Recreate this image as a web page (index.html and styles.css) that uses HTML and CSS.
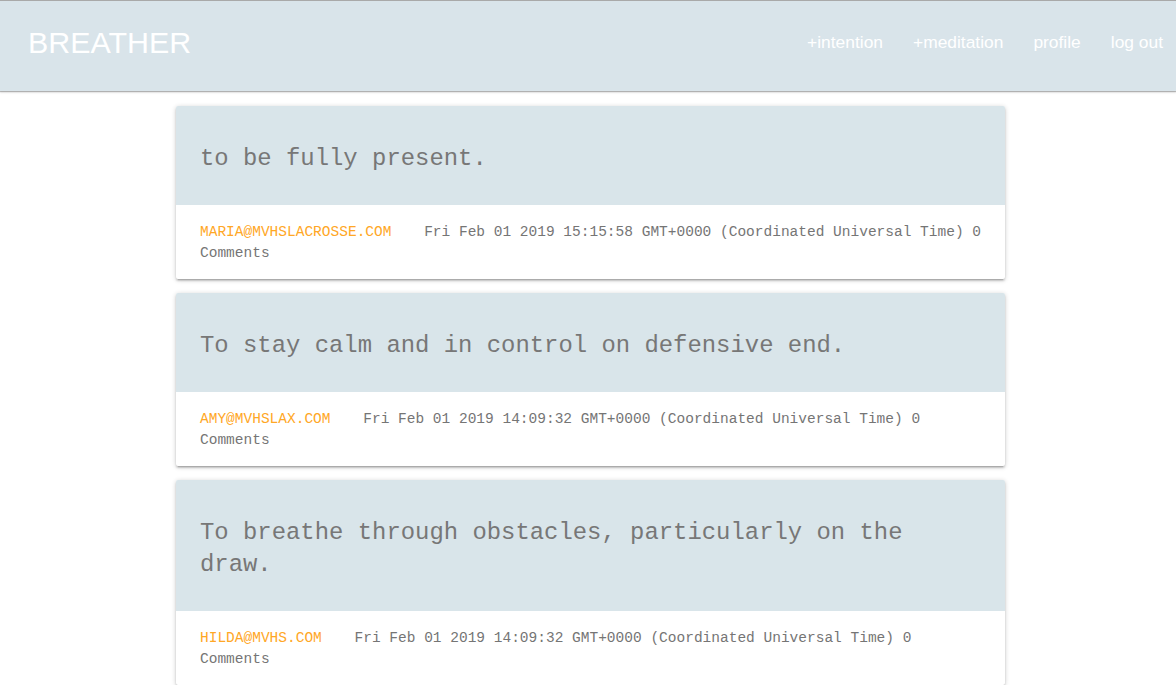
FILE: index.html
```html
<!DOCTYPE html>
<html>
<head>
<meta charset="utf-8">
<link rel="stylesheet" href="styles.css">
</head>
<body>
<nav class="nav">
  <a class="brand" href="#">BREATHER</a>
  <ul class="links">
    <li><a href="#">+intention</a></li>
    <li><a href="#">+meditation</a></li>
    <li><a href="#">profile</a></li>
    <li><a href="#">log out</a></li>
  </ul>
</nav>
<main class="container">
  <div class="card">
    <div class="card-title">to be fully present.</div>
    <div class="card-action"><span class="email">maria@mvhslacrosse.com</span> <span class="date">Fri Feb 01 2019 15:15:58 GMT+0000 (Coordinated Universal Time) 0</span> <span class="count">Comments</span></div>
  </div>
  <div class="card">
    <div class="card-title">To stay calm and in control on defensive end.</div>
    <div class="card-action"><span class="email">amy@mvhslax.com</span> <span class="date">Fri Feb 01 2019 14:09:32 GMT+0000 (Coordinated Universal Time) 0</span> <span class="count">Comments</span></div>
  </div>
  <div class="card">
    <div class="card-title">To breathe through obstacles, particularly on the draw.</div>
    <div class="card-action"><span class="email">hilda@mvhs.com</span> <span class="date">Fri Feb 01 2019 14:09:32 GMT+0000 (Coordinated Universal Time) 0</span> <span class="count">Comments</span></div>
  </div>
</main>
</body>
</html>
```
FILE: styles.css
```css
html, body {
  margin: 0;
  padding: 0;
  background: #fff;
}
body {
  font-family: "Liberation Sans", Arial, sans-serif;
  overflow: hidden;
}
.nav {
  height: 82px;
  padding-bottom: 8px;
  border-top: 1px solid #a9a9a9;
  background: #d9e4ea;
  box-shadow: 0 1px 1px rgba(0,0,0,0.25), 0 2px 2px rgba(0,0,0,0.08);
  display: flex;
  align-items: center;
  justify-content: space-between;
  position: relative;
  z-index: 2;
}
.brand {
  color: #fff;
  text-decoration: none;
  font-size: 30.4px;
  margin-left: 28px;
}
.links {
  list-style: none;
  margin: 0 -2px 0 0;
  padding: 0;
  display: flex;
}
.links a {
  display: block;
  padding: 0 15px;
  color: #fff;
  text-decoration: none;
  font-size: 17.4px;
}
.container {
  width: 829px;
  margin: 15px 0 0 176px;
  display: flex;
  flex-direction: column;
  gap: 14px;
}
.card {
  background: #fff;
  border-radius: 2px;
  box-shadow: 0 2px 2px 0 rgba(0,0,0,0.14), 0 3px 1px -2px rgba(0,0,0,0.12), 0 1px 5px 0 rgba(0,0,0,0.2);
  font-family: "Liberation Mono", "Courier New", monospace;
}
.card-title {
  background: #d9e5ea;
  color: #777;
  font-size: 23.9px;
  line-height: 32px;
  padding: 37px 24px 30px;
  border-radius: 2px 2px 0 0;
}
.card-action {
  padding: 17px 18px 15px 24px;
  font-size: 14.5px;
  line-height: 21px;
  color: #757575;
}
.email {
  color: #ffa726;
  text-transform: uppercase;
  margin-right: 24px;
}
```
